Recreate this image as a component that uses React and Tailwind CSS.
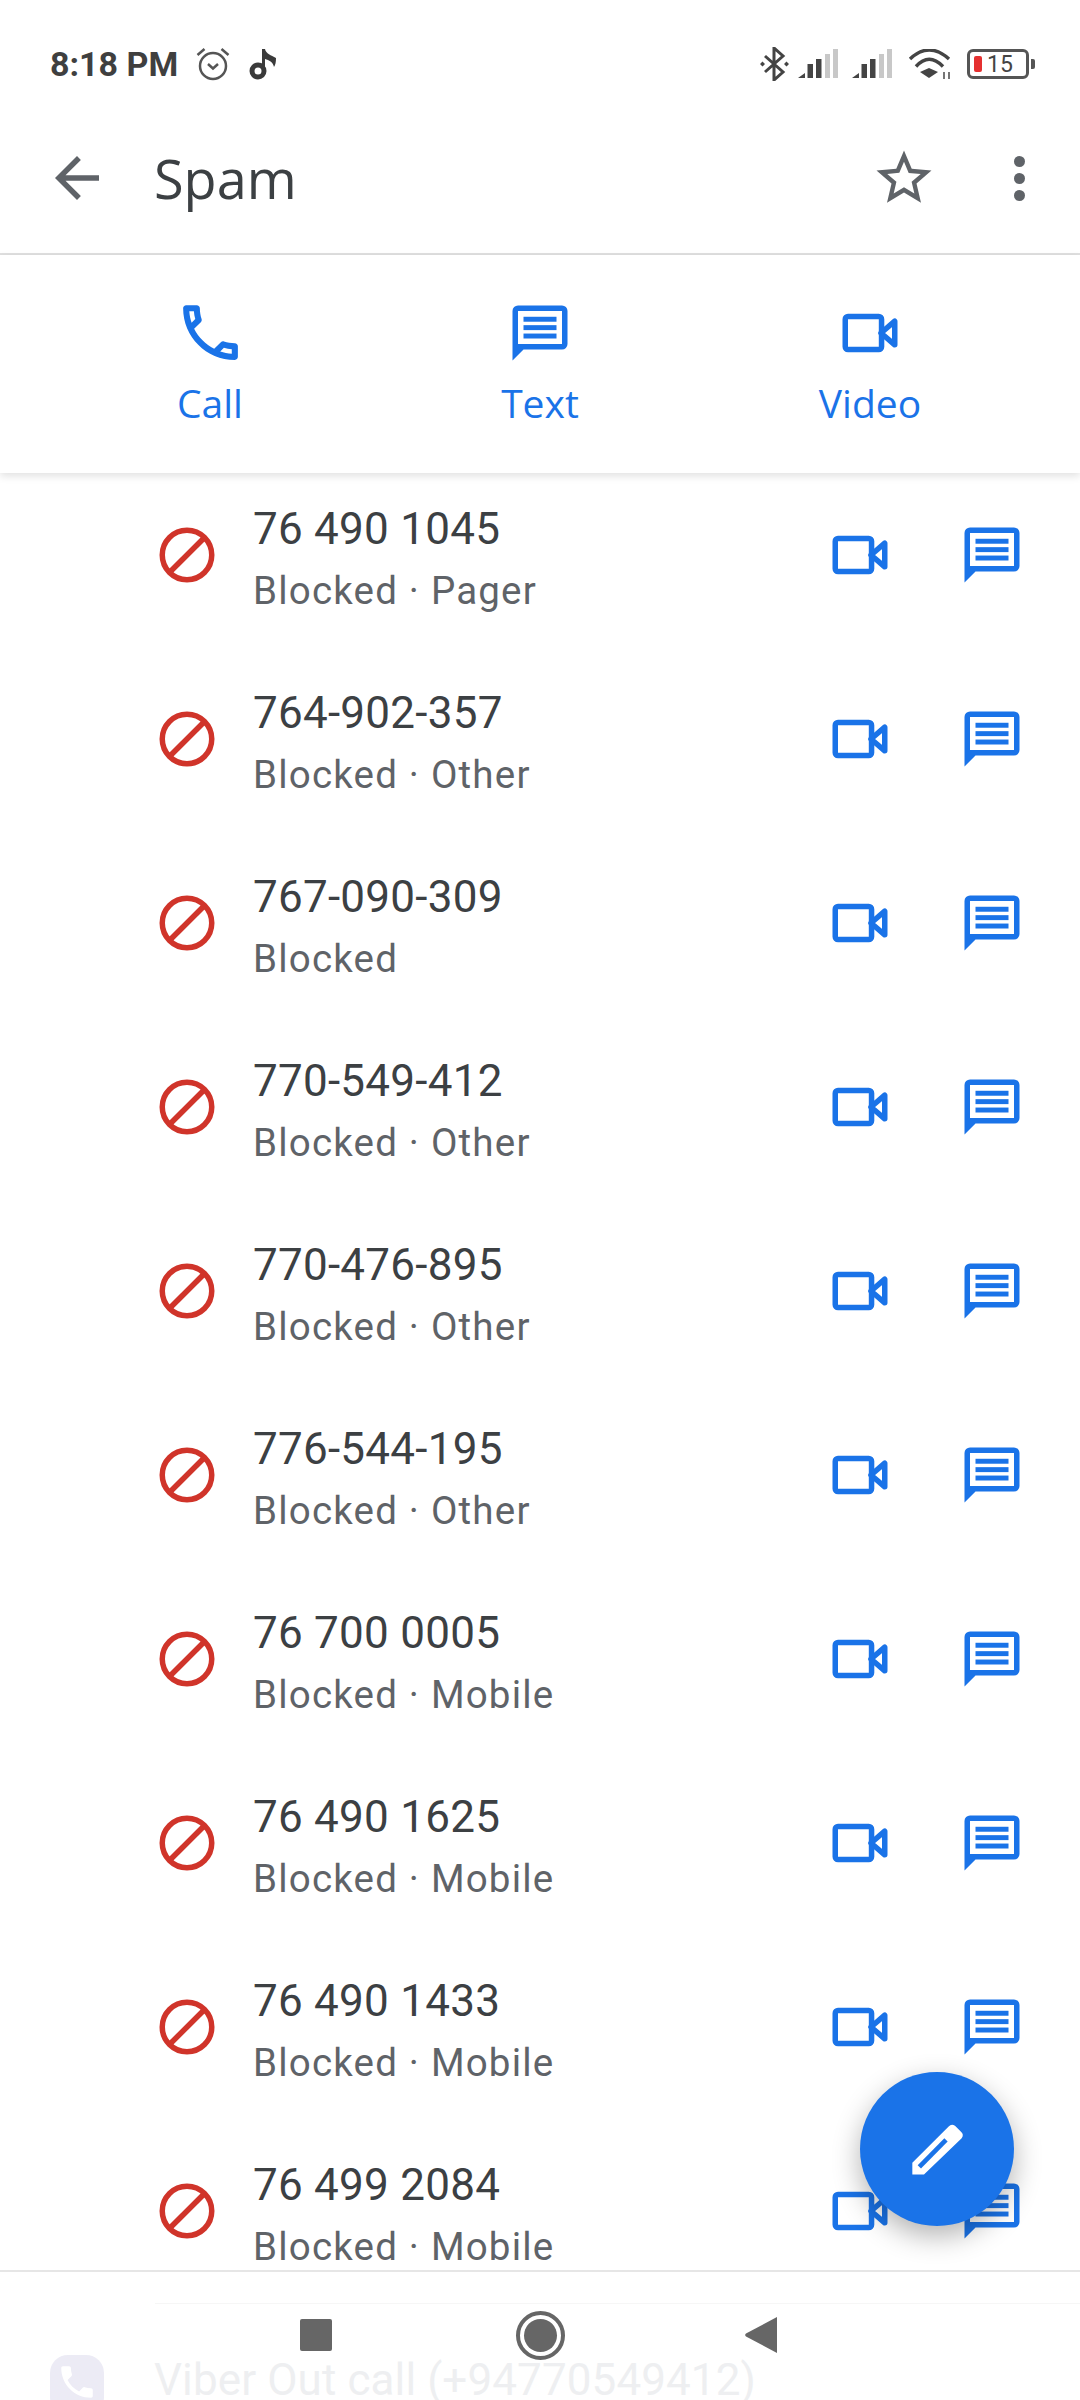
import clsx from 'clsx'

const ROWS = [
  { num: '76 490 1045', sub: 'Blocked · Pager' },
  { num: '764-902-357', sub: 'Blocked · Other' },
  { num: '767-090-309', sub: 'Blocked' },
  { num: '770-549-412', sub: 'Blocked · Other' },
  { num: '770-476-895', sub: 'Blocked · Other' },
  { num: '776-544-195', sub: 'Blocked · Other' },
  { num: '76 700 0005', sub: 'Blocked · Mobile' },
  { num: '76 490 1625', sub: 'Blocked · Mobile' },
  { num: '76 490 1433', sub: 'Blocked · Mobile' },
  { num: '76 499 2084', sub: 'Blocked · Mobile' },
]

const ROBOTO = "font-['Roboto',sans-serif]"
const SANS = "font-['Open_Sans',sans-serif]"

function PhoneIcon() {
  return (
    <svg width="73" height="73" viewBox="0 0 24 24" fill="#1a73e8">
      <path d="M6.54 5c.06.89.21 1.76.45 2.59l-1.2 1.2c-.41-1.2-.67-2.47-.76-3.79h1.51m9.86 12.02c.85.24 1.72.39 2.6.45v1.49c-1.32-.09-2.59-.35-3.8-.75l1.2-1.19M7.5 3H4c-.55 0-1 .45-1 1 0 9.39 7.61 17 17 17 .55 0 1-.45 1-1v-3.49c0-.55-.45-1-1-1-1.24 0-2.45-.2-3.57-.57-.1-.04-.21-.05-.31-.05-.26 0-.51.1-.71.29l-2.2 2.2c-2.83-1.45-5.15-3.76-6.59-6.59l2.2-2.2c.28-.28.36-.67.25-1.02C8.7 6.45 8.5 5.25 8.5 4c0-.55-.45-1-1-1z" />
    </svg>
  )
}

function ChatIcon() {
  return (
    <svg width="66" height="66" viewBox="0 0 24 24" fill="#1a73e8">
      <path
        fillRule="evenodd"
        d="M20 2H4a2 2 0 0 0-2 2v18l4-4h14a2 2 0 0 0 2-2V4a2 2 0 0 0-2-2zM4 4h16v12H4z"
      />
      <rect x="6" y="6.1" width="12" height="1.8" />
      <rect x="6" y="9.15" width="12" height="1.8" />
      <rect x="6" y="12.2" width="12" height="1.8" />
    </svg>
  )
}

function VideoIcon() {
  return (
    <svg width="66" height="66" viewBox="0 0 24 24" fill="none" stroke="#1a73e8" strokeWidth="2" strokeLinejoin="round">
      <path d="M16 12l5-4.3v8.6z" />
      <rect x="3" y="6" width="13.2" height="12" rx="1" />
    </svg>
  )
}

function BlockIcon() {
  return (
    <svg width="66" height="66" viewBox="0 0 24 24" fill="none" stroke="#d0342a" strokeWidth="2">
      <circle cx="12" cy="12" r="9" />
      <path d="M18.2 5.8L5.8 18.2" />
    </svg>
  )
}

function Signal() {
  return (
    <svg width="41" height="30" viewBox="0 0 41 30">
      <path d="M0 29l7-5v5z" fill="#444" />
      <rect x="9.5" y="15" width="5.5" height="14" fill="#444" />
      <rect x="18" y="10" width="5.5" height="19" fill="#444" />
      <rect x="27" y="5" width="5" height="24" fill="#c8c8c8" />
      <rect x="35" y="0" width="5" height="29" fill="#c8c8c8" />
    </svg>
  )
}

function StatusBar() {
  return (
    <div className="h-[103px] pt-[25px] pl-[50px] pr-[45px] flex items-start justify-between">
      <div className="h-[78px] flex items-center">
        <span className={clsx(ROBOTO, 'text-[34px] font-bold text-[#3f3f3f] leading-none')}>8:18 PM</span>
        {/* alarm */}
        <svg className="ml-[18px]" width="34" height="34" viewBox="0 0 34 34" fill="none" stroke="#555" strokeWidth="2.5">
          <circle cx="17" cy="19" r="13" />
          <path d="M12 17l5 4.5 5-4.5" />
          <path d="M1.5 8l7-6M32.5 8l-7-6" />
        </svg>
        {/* tiktok note */}
        <svg className="ml-[19px]" width="28" height="32" viewBox="0 0 28 32" fill="#3a3a3a">
          <circle cx="9" cy="23" r="6" fill="none" stroke="#3a3a3a" strokeWidth="5" />
          <path d="M13 1h3c1 5 6 6 11 9 0 4-.5 7-2 9-1-5-5-7-9-8v12h-3z" />
        </svg>
      </div>
      <div className="h-[78px] flex items-center">
        {/* bluetooth */}
        <svg width="29" height="34" viewBox="0 0 29 34" fill="none" stroke="#444" strokeWidth="3">
          <path d="M5 9l18 16-9 8V1l9 8L5 25" />
          <path d="M0 17l2.5-2.5L5 17l-2.5 2.5zM24 17l2.5-2.5L29 17l-2.5 2.5z" fill="#444" stroke="none" />
        </svg>
        <div className="ml-[9px]"><Signal /></div>
        <div className="ml-[13px]"><Signal /></div>
        {/* wifi */}
        <svg className="ml-[15px]" width="44" height="31" viewBox="0 0 44 31" fill="none" stroke="#444" strokeWidth="3.4">
          <path d="M2 10Q21-8 41 10" />
          <path d="M8 17.5Q21 3 35 17.5" />
          <path d="M12 23l9-4 9 4-9 6z" fill="#444" stroke="none" />
          <path d="M36 23v7M41 30v-7" stroke="#555" strokeWidth="1.6" />
        </svg>
        {/* battery */}
        <div className="ml-[15px] flex items-center">
          <div className="w-[62px] h-[30px] border-[3px] border-[#555] rounded-[6px] flex items-center pl-[4px]">
            <div className="w-[8px] h-[16px] bg-[#e53030] rounded-[2px]" />
            <span className={clsx(ROBOTO, 'ml-[5px] text-[23px] leading-none text-[#444]')}>15</span>
          </div>
          <div className="ml-[2px] w-[4px] h-[10px] bg-[#555] rounded-r-[2px]" />
        </div>
      </div>
    </div>
  )
}

function Toolbar() {
  return (
    <div className="h-[152px] border-b-2 border-[#e0e0e0] flex items-center pl-[44px] pr-[55px]">
      <svg width="66" height="66" viewBox="0 0 24 24" fill="#5f6368">
        <path d="M20 11H7.83l5.59-5.59L12 4l-8 8 8 8 1.41-1.41L7.83 13H20v-2z" />
      </svg>
      <div className={clsx(SANS, 'ml-[44px] flex-1 text-[54px] text-[#3c4043] leading-none')}>Spam</div>
      <svg width="66" height="66" viewBox="0 0 24 24" fill="#5f6368">
        <path d="M22 9.24l-7.19-.62L12 2 9.19 8.63 2 9.24l5.46 4.73L5.82 21 12 17.27 18.18 21l-1.63-7.03L22 9.24zM12 15.4l-3.76 2.27 1-4.28-3.32-2.88 4.38-.38L12 6.1l1.71 4.04 4.38.38-3.32 2.88 1 4.28L12 15.4z" />
      </svg>
      <div className="ml-[77px] flex flex-col gap-[6px]">
        <span className="w-[11px] h-[11px] rounded-full bg-[#5f6368]" />
        <span className="w-[11px] h-[11px] rounded-full bg-[#5f6368]" />
        <span className="w-[11px] h-[11px] rounded-full bg-[#5f6368]" />
      </div>
    </div>
  )
}

function ActionBar() {
  return (
    <div className="relative z-10 h-[218px] bg-white px-[45px] grid grid-cols-3 shadow-[0_3px_8px_rgba(0,0,0,0.12)]">
      {[
        { label: 'Call', icon: <PhoneIcon /> },
        { label: 'Text', icon: <ChatIcon /> },
        { label: 'Video', icon: <VideoIcon /> },
      ].map(a => (
        <div key={a.label} className="flex flex-col items-center">
          <div className="h-[73px] mt-[41px] flex items-center justify-center">{a.icon}</div>
          <div className={clsx(SANS, 'mt-[10px] text-[39px] font-medium text-[#1a73e8] leading-[48px]')}>{a.label}</div>
        </div>
      ))}
    </div>
  )
}

function Row({ num, sub }) {
  return (
    <div className="h-[184px] shrink-0 flex items-center pl-[154px] pr-[55px]">
      <BlockIcon />
      <div className={clsx(ROBOTO, 'ml-[33px] flex-1 pt-[10px]')}>
        <div className="text-[44px] leading-[61px] tracking-[0.25px] text-[#3c4043]">{num}</div>
        <div className="text-[38.5px] leading-[61px] tracking-[1.2px] text-[#5f6368]">{sub}</div>
      </div>
      <VideoIcon />
      <div className="ml-[66px]"><ChatIcon /></div>
    </div>
  )
}

function NavBar() {
  return (
    <div className="relative z-10 h-[130px] shrink-0 bg-white border-t-2 border-[#e6e6e6] overflow-hidden">
      <div className="mt-[31px] ml-[155px] h-[1px] bg-[#f6f6f6]" />
      <div className="h-[56px] mt-[3px] pl-[300px] flex items-center">
        <div className="w-[32px] h-[32px] rounded-[2px] bg-[#666]" />
        <div className="ml-[184px] w-[49px] h-[49px] rounded-full border-[4px] border-[#666] flex items-center justify-center">
          <div className="w-[33px] h-[33px] rounded-full bg-[#666]" />
        </div>
        <svg className="ml-[180px]" width="32" height="36" viewBox="0 0 32 36" fill="#666">
          <path d="M32 0v36L1 19.5a2 2 0 0 1 0-3z" />
        </svg>
      </div>
      <div className="flex items-start pl-[50px] -mt-[8px]">
        <div className="w-[54px] h-[60px] rounded-[18px] bg-[#ecebf5] flex items-start justify-center pt-[6px]">
          <svg width="42" height="42" viewBox="0 0 24 24" fill="#fff">
            <path d="M6.6 10.8c1.4 2.8 3.8 5.1 6.6 6.6l2.2-2.2c.3-.3.7-.4 1-.2 1.100.4 2.300.6 3.600.6.600 0 1 .4 1 1V20c0 .6-.4 1-1 1C10.600 21 3 13.400 3 4c0-.6.400-1 1-1h3.500c.6 0 1 .4 1 1 0 1.300.2 2.500.6 3.600.1.300 0 .7-.2 1z" />
          </svg>
        </div>
        <div className={clsx(ROBOTO, 'ml-[50px] text-[44px] leading-[50px] tracking-[0.1px] text-[#eeeff1] whitespace-nowrap')}>
          Viber Out call (+94770549412)
        </div>
      </div>
    </div>
  )
}

export default function App() {
  return (
    <div className="relative w-[1080px] h-[2400px] bg-white flex flex-col overflow-hidden">
      <StatusBar />
      <Toolbar />
      <ActionBar />
      <div className="flex-1 min-h-0 overflow-hidden -mt-[10px] flex flex-col">
        {ROWS.map(r => <Row key={r.num} {...r} />)}
      </div>
      <NavBar />

      {/* compose FAB */}
      <div className="absolute z-20 left-[860px] top-[2072px] w-[154px] h-[154px] rounded-full bg-[#1a73e8] shadow-[0_10px_28px_rgba(0,0,0,0.3)] flex items-center justify-center">
        <svg width="55" height="57" viewBox="450 240 165 170">
          <path d="M457 400v-35L566 256a14 14 0 0 1 19-2l18 18a14 14 0 0 1 2 19L492 400z" fill="#fff" />
          <path d="M478 377L558 296" stroke="#1a73e8" strokeWidth="14" fill="none" />
        </svg>
      </div>
    </div>
  )
}
